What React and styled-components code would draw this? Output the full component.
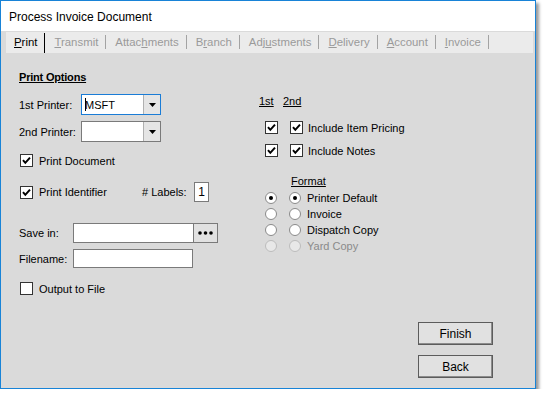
import React from "react";
import styled, { createGlobalStyle } from "styled-components";

const Global = createGlobalStyle`
  body {
    margin: 0;
    background: #ffffff;
    font-family: "Liberation Sans", Arial, sans-serif;
  }
`;

function CheckBox({ checked }) {
  return (
    <Box>
      {checked && (
        <svg width="11" height="11" viewBox="0 0 11 11">
          <polyline
            points="2,5.2 4.3,7.8 9,2.6"
            fill="none"
            stroke="#000"
            strokeWidth="2"
          />
        </svg>
      )}
    </Box>
  );
}

function Radio({ selected, disabled }) {
  return (
    <RadioDot disabled={disabled}>{selected && <Dot />}</RadioDot>
  );
}

function Combo({ value, focused }) {
  return (
    <ComboBox focused={focused}>
      <ComboText>
        {focused && <Caret />}
        {value}
      </ComboText>
      <DropButton>
        <svg width="7" height="4" viewBox="0 0 7 4">
          <polygon points="0,0 7,0 3.5,4" fill="#000" />
        </svg>
      </DropButton>
    </ComboBox>
  );
}

const tabs = [
  { pre: "", key: "P", post: "rint", active: true },
  { pre: "", key: "T", post: "ransmit" },
  { pre: "Attac", key: "h", post: "ments" },
  { pre: "B", key: "r", post: "anch" },
  { pre: "Adj", key: "u", post: "stments" },
  { pre: "", key: "D", post: "elivery" },
  { pre: "", key: "A", post: "ccount" },
  { pre: "", key: "I", post: "nvoice" },
];

const formats = [
  { label: "Printer Default", selected: true },
  { label: "Invoice" },
  { label: "Dispatch Copy" },
  { label: "Yard Copy", disabled: true },
];

export default function App() {
  return (
    <>
      <Global />
      <Window>
        <TitleBar>Process Invoice Document</TitleBar>
        <TabStrip>
          {tabs.map((t) => (
            <Tab key={t.post} active={t.active}>
              {t.pre}
              <u>{t.key}</u>
              {t.post}
            </Tab>
          ))}
        </TabStrip>
        <Body>
          <Form>
            <LeftCol>
              <Row h={14}>
                <Heading>Print Options</Heading>
              </Row>
              <Row h={21} mt={10}>
                <Label w={62}>1st Printer:</Label>
                <Combo value="MSFT" focused />
              </Row>
              <Row h={21} mt={6}>
                <Label w={62}>2nd Printer:</Label>
                <Combo value="" />
              </Row>
              <Row h={13} mt={12} pl={1}>
                <CheckBox checked />
                <CheckLabel>Print Document</CheckLabel>
              </Row>
              <Row h={20} mt={15} pl={1}>
                <CheckBox checked />
                <CheckLabel w={103}>Print Identifier</CheckLabel>
                <Label w={52}># Labels:</Label>
                <SmallBox>1</SmallBox>
              </Row>
              <Row h={20} mt={21}>
                <Label w={54}>Save in:</Label>
                <TextInput w={121} />
                <EllipsisButton>
                  <svg width="15" height="4" viewBox="0 0 15 4">
                    <circle cx="2" cy="2" r="1.8" fill="#000" />
                    <circle cx="7.5" cy="2" r="1.8" fill="#000" />
                    <circle cx="13" cy="2" r="1.8" fill="#000" />
                  </svg>
                </EllipsisButton>
              </Row>
              <Row h={19} mt={6}>
                <Label w={54}>Filename:</Label>
                <TextInput w={120} />
              </Row>
              <Row h={13} mt={14} pl={1}>
                <CheckBox />
                <CheckLabel>Output to File</CheckLabel>
              </Row>
            </LeftCol>
            <RightCol>
              <Row h={14} mt={24}>
                <Heading plain w={24}>1st</Heading>
                <Heading plain>2nd</Heading>
              </Row>
              <Row h={13} mt={13} pl={6}>
                <CheckBox checked />
                <Spacer w={12} />
                <CheckBox checked />
                <CheckLabel gap={5}>Include Item Pricing</CheckLabel>
              </Row>
              <Row h={13} mt={10} pl={6}>
                <CheckBox checked />
                <Spacer w={12} />
                <CheckBox checked />
                <CheckLabel gap={5}>Include Notes</CheckLabel>
              </Row>
              <Row h={14} mt={17} pl={32}>
                <Heading plain>Format</Heading>
              </Row>
              <RadioList>
                {formats.map((f) => (
                  <Row h={16} key={f.label} pl={6}>
                    <Radio selected={f.selected} disabled={f.disabled} />
                    <Spacer w={12} />
                    <Radio selected={f.selected} disabled={f.disabled} />
                    <CheckLabel gap={6} disabled={f.disabled}>
                      {f.label}
                    </CheckLabel>
                  </Row>
                ))}
              </RadioList>
            </RightCol>
          </Form>
          <Footer>
            <PushButton>Finish</PushButton>
            <PushButton>Back</PushButton>
          </Footer>
        </Body>
      </Window>
    </>
  );
}

const Window = styled.div`
  width: 534px;
  height: 387px;
  border: 1px solid #1883d7;
  background: #dadada;
  box-shadow: 3px 3px 3px rgba(0, 0, 0, 0.4);
  display: flex;
  flex-direction: column;
  font-size: 11px;
  color: #000;
`;

const TitleBar = styled.div`
  height: 30px;
  background: #ffffff;
  display: flex;
  align-items: center;
  padding: 1px 0 0 8px;
  box-sizing: border-box;
  font-size: 12px;
  color: #000;
`;

const TabStrip = styled.div`
  height: 21px;
  margin: 1px 2px 0 5px;
  background: #ebebeb;
  display: flex;
  align-items: center;
  padding-left: 8px;
`;

const Tab = styled.div`
  position: relative;
  padding-right: 8px;
  margin-right: 9px;
  font-size: 11.4px;
  color: ${(p) => (p.active ? "#000" : "#9a9a9a")};
  line-height: 21px;
  white-space: nowrap;

  &::after {
    content: "";
    position: absolute;
    right: 0;
    top: ${(p) => (p.active ? "1px" : "3px")};
    bottom: ${(p) => (p.active ? "0" : "4px")};
    width: 1px;
    background: ${(p) => (p.active ? "#000" : "#a3a3a3")};
  }
`;

const Body = styled.div`
  flex: 1;
  display: flex;
  flex-direction: column;
  padding: 17px 0 10px 18px;
`;

const Form = styled.div`
  display: flex;
`;

const LeftCol = styled.div`
  width: 240px;
  display: flex;
  flex-direction: column;
`;

const RightCol = styled.div`
  display: flex;
  flex-direction: column;
`;

const RadioList = styled.div`
  display: flex;
  flex-direction: column;
  margin-top: 2px;
`;

const Row = styled.div`
  display: flex;
  align-items: center;
  height: ${(p) => p.h}px;
  margin-top: ${(p) => p.mt || 0}px;
  padding-left: ${(p) => p.pl || 0}px;
  white-space: nowrap;
`;

const Heading = styled.span`
  font-weight: ${(p) => (p.plain ? "normal" : "bold")};
  text-decoration: underline;
  width: ${(p) => (p.w ? `${p.w}px` : "auto")};
  letter-spacing: ${(p) => (p.plain ? "0" : "-0.2px")};
`;

const Label = styled.span`
  width: ${(p) => p.w}px;
  flex-shrink: 0;
`;

const CheckLabel = styled.span`
  margin-left: ${(p) => (p.gap ?? 6)}px;
  width: ${(p) => (p.w ? `${p.w}px` : "auto")};
  color: ${(p) => (p.disabled ? "#8a8a8a" : "#000")};
`;

const Spacer = styled.span`
  width: ${(p) => p.w}px;
  flex-shrink: 0;
`;

const Box = styled.span`
  width: 13px;
  height: 13px;
  box-sizing: border-box;
  border: 1px solid #333;
  background: #fff;
  display: flex;
  align-items: center;
  justify-content: center;
  flex-shrink: 0;
`;

const RadioDot = styled.span`
  width: 12px;
  height: 12px;
  box-sizing: border-box;
  border-radius: 50%;
  border: 1px solid ${(p) => (p.disabled ? "#bcbcbc" : "#8a8a8a")};
  background: ${(p) => (p.disabled ? "#e8e8e8" : "#fff")};
  display: flex;
  align-items: center;
  justify-content: center;
  flex-shrink: 0;
`;

const Dot = styled.span`
  width: 4px;
  height: 4px;
  border-radius: 50%;
  background: #000;
`;

const ComboBox = styled.div`
  width: 80px;
  height: 21px;
  box-sizing: border-box;
  border: 1px solid ${(p) => (p.focused ? "#1a7cd6" : "#7a7a7a")};
  background: #fff;
  display: flex;
`;

const ComboText = styled.div`
  flex: 1;
  display: flex;
  align-items: center;
  padding-left: 3px;
  font-size: 11px;
`;

const Caret = styled.span`
  width: 1px;
  height: 13px;
  background: #000;
  margin-right: -1px;
`;

const DropButton = styled.div`
  width: 16px;
  border-left: 1px solid #b0b0b0;
  background: #e5e5e5;
  display: flex;
  align-items: center;
  justify-content: center;
`;

const SmallBox = styled.div`
  width: 15px;
  height: 20px;
  box-sizing: border-box;
  border: 1px solid #7a7a7a;
  background: #fff;
  display: flex;
  align-items: center;
  justify-content: center;
  font-size: 12px;
`;

const TextInput = styled.div`
  width: ${(p) => p.w}px;
  height: 100%;
  box-sizing: border-box;
  border: 1px solid #7a7a7a;
  background: #fff;
`;

const EllipsisButton = styled.div`
  width: 24px;
  height: 100%;
  box-sizing: border-box;
  border: 1px solid #7a7a7a;
  border-left: none;
  background: #e1e1e1;
  display: flex;
  align-items: center;
  justify-content: center;
`;

const Footer = styled.div`
  margin-top: auto;
  display: flex;
  flex-direction: column;
  align-items: flex-end;
  gap: 10px;
  padding-right: 42px;
`;

const PushButton = styled.button`
  width: 75px;
  height: 23px;
  box-sizing: border-box;
  border: 1px solid #5c5c5c;
  box-shadow: inset -1px -1px 0 #8c8c8c;
  background: #e1e1e1;
  font-family: "Liberation Sans", Arial, sans-serif;
  font-size: 12px;
  color: #000;
  padding: 0;
`;
